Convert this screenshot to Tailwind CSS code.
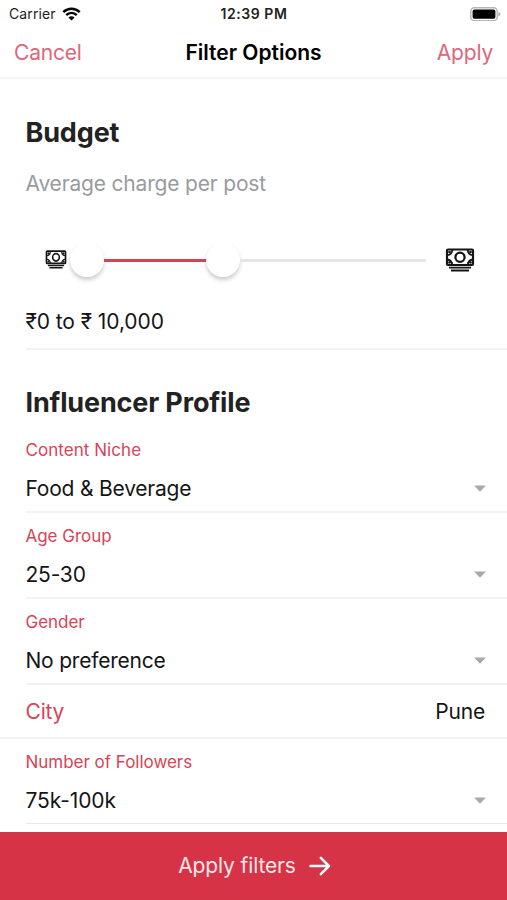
<!DOCTYPE html>
<html lang="en">
<head>
<meta charset="utf-8">
<meta name="viewport" content="width=device-width">
<title>Filter Options</title>
<script src="https://cdn.jsdelivr.net/npm/@tailwindcss/browser@4"></script>
</head>
<body class="bg-white">
<svg class="hidden" aria-hidden="true">
  <symbol id="cash" viewBox="0 0 30 24" preserveAspectRatio="none">
    <g fill="none" stroke="#151515" stroke-width="2.200">
      <rect x="2" y="1.500" width="26" height="15.500" rx="1"/>
      <circle cx="15" cy="9.300" r="4.600"/>
      <path d="M2 7.200Q7 7 7.300 2M22.700 2Q23 7 28 7.200M2 11.500Q7 12 7.300 17M22.700 17Q23 12 28 11.500" stroke-width="1.800"/>
      <path d="M4 19.600H26M6 22.500H24" stroke-width="1.900"/>
    </g>
    <g fill="#151515"><circle cx="4.500" cy="4" r="1.300"/><circle cx="25.500" cy="4" r="1.300"/><circle cx="4.500" cy="14.500" r="1.300"/><circle cx="25.500" cy="14.500" r="1.300"/></g>
  </symbol>
  <symbol id="caret" viewBox="0 0 12 7"><path d="M0 .5H12L6 6.700Z" fill="#a9a9a9"/></symbol>
</svg>
<div class="flex h-[900px] w-[507px] flex-col overflow-hidden bg-white font-['Inter','Noto_Sans',sans-serif] text-[21px] tracking-[-0.21px] text-[#151515]">
  <div class="grid h-[27px] shrink-0 grid-cols-3 items-center pr-[6px] pl-[9px] text-[14px] text-[#222]">
    <div class="flex items-center gap-[6px]">
      <span class="tracking-[0.1px]">Carrier</span>
      <svg class="h-[14px] w-[19px]" viewBox="0 0 19 14" fill="none" stroke="#050505" stroke-width="2.600"><path d="M1.300 5.100C6 .6 13 .6 17.700 5.100M4.200 8.100C7.300 5.200 11.700 5.200 14.800 8.100"/><path d="M9.500 13.600L6.400 10.400C8.200 8.800 10.800 8.800 12.600 10.400Z" fill="#050505" stroke="none"/></svg>
    </div>
    <span class="pr-[2px] text-center font-semibold tracking-[0.55px] whitespace-nowrap">12:39 PM</span>
    <svg class="h-[14px] w-[31px] justify-self-end" viewBox="0 0 31 14"><rect x=".8" y=".8" width="26.400" height="12.800" rx="3.600" fill="#fff" stroke="#b5b5b5" stroke-width="1.400"/><rect x="2.600" y="2.600" width="22.800" height="9.200" rx="1.800" fill="#000"/><path d="M28.500 5Q30.300 5.500 30.300 7.200T28.500 9.400Z" fill="#aaa"/></svg>
  </div>
  <header class="flex h-[52px] shrink-0 items-center justify-between border-b-2 border-[#f5f5f5] px-[14px] pt-[2px] text-[#e0667a]">
    <span class="w-[80px]">Cancel</span>
    <h1 class="text-[21px] font-semibold tracking-normal text-black">Filter Options</h1>
    <span class="w-[80px] text-right">Apply</span>
  </header>
  <main class="flex h-[753px] shrink-0 flex-col">
    <section class="ml-[25.500px] flex h-[271px] flex-col border-b-2 border-[#f2f2f2] pt-[34px]">
      <h2 class="h-[40px] text-[27px] leading-[40px] font-bold tracking-[-0.15px] text-[#222]">Budget</h2>
      <p class="mt-[16px] h-[30px] leading-[30px] tracking-[-0.18px] text-[#999b9f]">Average charge per post</p>
      <div class="mt-[40px] flex h-[42px] items-center pl-[19.500px]">
        <svg class="-mt-px h-[19px] w-[22px]"><use href="#cash"/></svg>
        <div class="ml-[3px] flex items-center">
          <div class="size-[34px] rounded-full bg-white shadow-[0_3px_4px_rgba(0,0,0,0.2)]"></div>
          <div class="h-[3px] w-[102px] bg-[#d64452]"></div>
          <div class="size-[34px] rounded-full bg-white shadow-[0_3px_4px_rgba(0,0,0,0.2)]"></div>
          <div class="h-[3px] w-[186px] bg-[#e6e6e6]"></div>
        </div>
        <svg class="-mt-px ml-[19px] h-[24px] w-[30px]"><use href="#cash"/></svg>
      </div>
      <p class="mt-[26px] h-[30px] leading-[30px] tracking-[-0.08px]">₹0 to ₹ 10,000</p>
    </section>
    <h2 class="mt-[33px] ml-[25.500px] h-[40px] text-[27px] leading-[40px] font-bold tracking-[-0.15px] text-[#222]">Influencer Profile</h2>
    <div class="mt-[17px] ml-[25.500px] flex h-[73px] shrink-0 flex-col border-b-2 border-[#f2f2f2]">
      <span class="h-[20px] text-[17px] leading-[20px] tracking-[0.05px] text-[#d64458]">Content Niche</span>
      <div class="mt-[13px] flex h-[30px] items-center justify-between pr-[21px]"><span class="pt-[2px]">Food &amp; Beverage</span><svg class="h-[7px] w-[12px]"><use href="#caret"/></svg></div>
    </div>
    <div class="ml-[25.500px] flex h-[86px] shrink-0 flex-col border-b-2 border-[#f2f2f2] pt-[13px]">
      <span class="h-[20px] text-[17px] leading-[20px] tracking-[-0.02px] text-[#d64458]">Age Group</span>
      <div class="mt-[13px] flex h-[30px] items-center justify-between pr-[21px]"><span class="pt-[2px]">25-30</span><svg class="h-[7px] w-[12px]"><use href="#caret"/></svg></div>
    </div>
    <div class="ml-[25.500px] flex h-[86px] shrink-0 flex-col border-b-2 border-[#f2f2f2] pt-[13px]">
      <span class="h-[20px] text-[17px] leading-[20px] tracking-[-0.02px] text-[#d64458]">Gender</span>
      <div class="mt-[13px] flex h-[30px] items-center justify-between pr-[21px]"><span class="pt-[2px]">No preference</span><svg class="h-[7px] w-[12px]"><use href="#caret"/></svg></div>
    </div>
    <div class="flex h-[54px] shrink-0 items-center justify-between border-b-2 border-[#f2f2f2] pt-px pr-[22px] pl-[25.500px]"><span class="text-[#d64458]">City</span><span>Pune</span></div>
    <div class="ml-[25.500px] flex h-[85px] shrink-0 flex-col border-b border-[#e8e8e8] pt-[13px]">
      <span class="h-[20px] text-[17px] leading-[20px] tracking-[-0.02px] text-[#d64458]">Number of Followers</span>
      <div class="mt-[13px] flex h-[30px] items-center justify-between pr-[21px]"><span class="pt-[2px] tracking-[-0.1px]">75k-100k</span><svg class="h-[7px] w-[12px]"><use href="#caret"/></svg></div>
    </div>
  </main>
  <button class="flex h-[68px] shrink-0 items-center justify-center gap-[13px] bg-[#d63346] pl-[2px] text-[#fbe6e9]">
    <span class="tracking-[-0.12px]">Apply filters</span>
    <svg class="h-[20px] w-[22px]" viewBox="0 0 22 20" fill="none" stroke="#fff" stroke-width="2.500" stroke-linecap="round" stroke-linejoin="round"><path d="M1.500 10H20M11.800 1.800L20 10L11.800 18.200"/></svg>
  </button>
</div>
</body>
</html>
